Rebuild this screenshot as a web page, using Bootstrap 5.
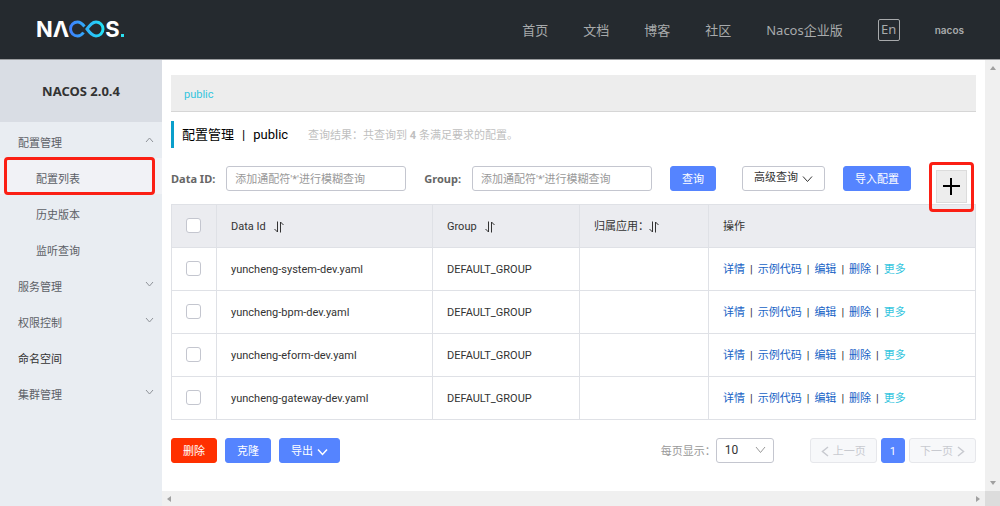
<!DOCTYPE html>
<html lang="zh-CN">
<head>
<meta charset="utf-8">
<meta name="viewport" content="width=device-width, initial-scale=1">
<title>Nacos</title>
<link href="https://cdn.jsdelivr.net/npm/bootstrap@5.3.0/dist/css/bootstrap.min.css" rel="stylesheet">
<style>
  body { font: 11px/18px Roboto, "Noto Sans CJK SC", sans-serif; color: #333; background: #fff; }
  a { text-decoration: none; }
  svg { display: block; fill: none; stroke: currentColor; }

  /* top bar */
  .topbar { height: 60px; padding: 0 36px; background: #252a2f; border-bottom: 1px solid #9b9da0; }
  .brand-mark { padding-bottom: 2px; font: 700 22px/24px Inter, sans-serif; color: #fff; }
  .brand-dot { width: 3px; height: 3px; margin: 14px 0 0 1px; background: #2ae0f0; }
  .topnav { gap: 35px; font-size: 13px; font-family: "Noto Sans", "Noto Sans CJK SC", sans-serif; }
  .topnav a { color: #a8aaac; }
  .topnav .lang { width: 22px; height: 22px; line-height: 18px; border: 1px solid #a8aaac; border-radius: 2px; text-align: center; }
  .topnav .account { font: 600 10px/20px Inter, sans-serif; }

  /* side menu */
  .side { width: 162px; background: #e9edf2; }
  .side-title { height: 62px; font: 700 13px/20px "Noto Sans", sans-serif; background: #d9dde4; }
  .side-item { height: 36px; padding: 8px 8px 0 18px; color: #5c6066; }
  .side-item.sub { padding-left: 36px; }
  .side-item.dark { color: #333; }
  .side-item.current { background: #f1f2f6; }
  .side-item svg { margin-bottom: 8px; color: #8f9399; }
  .callout-frame { position: absolute; border: 3px solid #fb1f14; border-radius: 4px; pointer-events: none; }
  .side .callout-frame { inset: -1px 7px -1px 4px; }

  /* scroll bars */
  .bar-v { width: 15px; padding: 6px 0; background: #f0f0f0; }
  .bar-h { height: 15px; padding: 0 5px; background: #f0f0f0; }
  .bar-corner { width: 15px; background: #dcdcdc; }
  .bar-v svg, .bar-h svg { fill: #a0a0a0; stroke: none; }

  /* content */
  .content { padding: 15px 9px 0; }
  .namespace { height: 37px; padding: 3px 13px 0; background: #ededed; border-bottom: 1px solid #d6d6d6; }
  .namespace a { color: #33c5de; }
  .page-title { height: 27px; margin: 9px 0 18px; padding-left: 8px; border-left: 3px solid #0a9fcb; gap: 20px; }
  .page-title h1 { margin: 0; font-size: 13px; line-height: 20px; color: #000; }
  .page-title p { margin: 0; padding-top: 2px; color: #bfbfbf; }
  .search { height: 38px; }
  .search label { font: 700 11px/25px "Noto Sans", sans-serif; color: #666; white-space: nowrap; }
  .gap-s { margin-left: 11px; }
  .gap-m { margin-left: 18px; }
  .gap-l { margin-left: 26px; }
  .field { width: 180px; height: 25px; padding: 2px 8px 0; font-size: 11px; border: 1px solid #c4c6cf; border-radius: 3px; }
  .field::placeholder { color: #999; }
  .tool { height: 25px; padding: 2px 11px 0; font-size: 11px; line-height: 21px; border-radius: 3px; white-space: nowrap; }
  .tool.blue { color: #fff; background: #5584ff; border-color: #5584ff; }
  .tool.red { color: #fff; background: #ff3000; border-color: #ff3000; }
  .tool.plain { padding-top: 0; color: #333; background: #fff; border-color: #c4c6cf; }
  .tool.pager, .tool.pager:disabled { padding: 2px 10px 0; color: #c8cad0; background: #f7f8fa; border-color: #e6e7eb; opacity: 1; }
  .add { position: relative; width: 31px; height: 33px; margin: 4px 9px 0 0; background: #ededed; border: 1px solid #dcdcdc; color: #000; }
  .add .callout-frame { inset: -9px -8px -10px -8px; z-index: 2; }

  .configs { table-layout: fixed; margin: 0 0 18px; border: 1px solid #dcdee3; }
  .configs th, .configs td { height: 43px; padding: 2px 14px 0; border: 1px solid #dfe1e6; font-weight: 400; vertical-align: middle; color: #333; }
  .configs th { background: #ebecf0; }
  .configs .form-check-input { display: block; width: 15px; height: 15px; margin: -4px 0 0; border: 1px solid #c4c6cf; border-radius: 3px; }
  .ops { gap: 5px; }
  .configs td a { color: #1763c6; }
  .configs td a.more { color: #33c5de; }
  .size-label { padding-top: 2px; color: #999; }
  .size-pick { width: 58px; height: 25px; padding: 0 8px; font-size: 12px; line-height: 23px; color: #333; border: 1px solid #c4c6cf; border-radius: 3px; appearance: none; background-color: #fff; }
  .size-caret { position: absolute; right: 8px; top: 8px; color: #999; pointer-events: none; }
  .pages { margin-left: 36px; }
</style>
</head>
<body class="d-flex flex-column min-vh-100">

<header class="topbar d-flex align-items-center justify-content-between flex-shrink-0">
  <a href="#" class="brand-mark d-flex align-items-center" aria-label="NACOS">
    <span>N</span><span>Λ</span>
    <svg width="36" height="18" viewBox="0 0 36 18" stroke-width="3">
      <defs><linearGradient id="flow" gradientUnits="userSpaceOnUse" x1="0" y1="0" x2="36" y2="0"><stop offset="0" stop-color="#3f7dff"/><stop offset="1" stop-color="#1fe6f5"/></linearGradient></defs>
      <path stroke="url(#flow)" d="M14.500 12.500C12.800 15 11 16 8.500 16A7 7 0 0 1 8.500 2C11.500 2 13.500 4 15.500 6.500M18 9C21 5 23.300 2 27 2A7 7 0 0 1 27 16C23.300 16 21 13 18 9Z"/>
    </svg>
    <span>S</span><i class="brand-dot"></i>
  </a>
  <nav class="topnav d-flex align-items-center">
    <a href="#">首页</a><a href="#">文档</a><a href="#">博客</a><a href="#">社区</a><a href="#">Nacos企业版</a>
    <a href="#" class="lang">En</a><a href="#" class="account">nacos</a>
  </nav>
</header>

<div class="d-flex flex-grow-1">
  <aside class="side flex-shrink-0">
    <div class="side-title d-flex align-items-center justify-content-center">NACOS 2.0.4</div>
    <nav>
      <a href="#" class="side-item d-flex align-items-center justify-content-between">配置管理<svg width="9" height="6" viewBox="0 0 9 6"><path d="M1 5l3.500-4L8 5"/></svg></a>
      <div class="position-relative">
        <a href="#" class="side-item sub current d-flex align-items-center">配置列表</a>
        <span class="callout-frame"></span>
      </div>
      <a href="#" class="side-item sub d-flex align-items-center">历史版本</a>
      <a href="#" class="side-item sub d-flex align-items-center">监听查询</a>
      <a href="#" class="side-item d-flex align-items-center justify-content-between">服务管理<svg width="9" height="6" viewBox="0 0 9 6"><path d="M1 1l3.500 4L8 1"/></svg></a>
      <a href="#" class="side-item d-flex align-items-center justify-content-between">权限控制<svg width="9" height="6" viewBox="0 0 9 6"><path d="M1 1l3.500 4L8 1"/></svg></a>
      <a href="#" class="side-item dark d-flex align-items-center">命名空间</a>
      <a href="#" class="side-item d-flex align-items-center justify-content-between">集群管理<svg width="9" height="6" viewBox="0 0 9 6"><path d="M1 1l3.500 4L8 1"/></svg></a>
    </nav>
  </aside>

  <div class="d-flex flex-column flex-grow-1">
    <div class="d-flex flex-grow-1">
      <main class="content flex-grow-1">
        <div class="namespace d-flex align-items-center"><a href="#">public</a></div>

        <div class="page-title d-flex align-items-center">
          <h1 class="fw-normal d-flex gap-2"><span>配置管理</span><span>|</span><span>public</span></h1>
          <p>查询结果：共查询到 <b>4</b> 条满足要求的配置。</p>
        </div>

        <form class="search d-flex align-items-start">
          <label for="data-id">Data ID:</label>
          <input id="data-id" class="field gap-s" type="text" placeholder="添加通配符'*'进行模糊查询">
          <label for="group" class="gap-m">Group:</label>
          <input id="group" class="field gap-s" type="text" placeholder="添加通配符'*'进行模糊查询">
          <button type="button" class="btn tool blue gap-m">查询</button>
          <button type="button" class="btn tool plain gap-l d-flex gap-1">高级查询<svg class="align-self-center" width="11" height="8" viewBox="0 0 11 8"><path d="M1 1.500l4.500 5 4.500-5"/></svg></button>
          <button type="button" class="btn tool blue gap-m">导入配置</button>
          <button type="button" class="add p-0 ms-auto d-flex align-items-center justify-content-center" aria-label="新建配置">
            <svg width="19" height="19" viewBox="0 0 19 19" stroke-width="2"><path d="M1 9h17M9 1v17"/></svg>
            <span class="callout-frame"></span>
          </button>
        </form>

        <table class="configs table">
          <colgroup><col style="width:45px"><col style="width:216px"><col style="width:147px"><col style="width:129px"><col></colgroup>
          <thead>
            <tr>
              <th><input class="form-check-input" type="checkbox" aria-label="全选"></th>
              <th><span class="d-flex align-items-center gap-2">Data Id<svg width="10" height="12" viewBox="0 0 10 12"><path d="M3.500 .5v10.500L.5 8M6.500 11.500V1l3 3"/></svg></span></th>
              <th><span class="d-flex align-items-center gap-2">Group<svg width="10" height="12" viewBox="0 0 10 12"><path d="M3.500 .5v10.500L.5 8M6.500 11.500V1l3 3"/></svg></span></th>
              <th><span class="d-flex align-items-center">归属应用：<svg width="10" height="12" viewBox="0 0 10 12"><path d="M3.500 .5v10.500L.5 8M6.500 11.500V1l3 3"/></svg></span></th>
              <th>操作</th>
            </tr>
          </thead>
          <tbody>
            <tr><td><input class="form-check-input" type="checkbox" aria-label="yuncheng-system-dev.yaml"></td><td>yuncheng-system-dev.yaml</td><td>DEFAULT_GROUP</td><td></td>
              <td><div class="d-flex ops"><a href="#">详情</a><span>|</span><a href="#">示例代码</a><span>|</span><a href="#">编辑</a><span>|</span><a href="#">删除</a><span>|</span><a href="#" class="more">更多</a></div></td></tr>
            <tr><td><input class="form-check-input" type="checkbox" aria-label="yuncheng-bpm-dev.yaml"></td><td>yuncheng-bpm-dev.yaml</td><td>DEFAULT_GROUP</td><td></td>
              <td><div class="d-flex ops"><a href="#">详情</a><span>|</span><a href="#">示例代码</a><span>|</span><a href="#">编辑</a><span>|</span><a href="#">删除</a><span>|</span><a href="#" class="more">更多</a></div></td></tr>
            <tr><td><input class="form-check-input" type="checkbox" aria-label="yuncheng-eform-dev.yaml"></td><td>yuncheng-eform-dev.yaml</td><td>DEFAULT_GROUP</td><td></td>
              <td><div class="d-flex ops"><a href="#">详情</a><span>|</span><a href="#">示例代码</a><span>|</span><a href="#">编辑</a><span>|</span><a href="#">删除</a><span>|</span><a href="#" class="more">更多</a></div></td></tr>
            <tr><td><input class="form-check-input" type="checkbox" aria-label="yuncheng-gateway-dev.yaml"></td><td>yuncheng-gateway-dev.yaml</td><td>DEFAULT_GROUP</td><td></td>
              <td><div class="d-flex ops"><a href="#">详情</a><span>|</span><a href="#">示例代码</a><span>|</span><a href="#">编辑</a><span>|</span><a href="#">删除</a><span>|</span><a href="#" class="more">更多</a></div></td></tr>
          </tbody>
        </table>

        <div class="d-flex align-items-center">
          <button type="button" class="btn tool red">删除</button>
          <button type="button" class="btn tool blue ms-2">克隆</button>
          <button type="button" class="btn tool blue ms-2 d-flex gap-1">导出<svg class="align-self-center" width="11" height="8" viewBox="0 0 11 8" stroke-width="1.500"><path d="M1 1.500l4.500 5 4.500-5"/></svg></button>
          <label for="page-size" class="size-label ms-auto">每页显示：</label>
          <div class="position-relative">
            <select id="page-size" class="size-pick"><option>10</option><option>20</option></select>
            <svg class="size-caret" width="11" height="8" viewBox="0 0 11 8"><path d="M1 1l4.500 5.500L10 1"/></svg>
          </div>
          <nav class="pages d-flex gap-1">
            <button type="button" class="btn tool pager d-flex gap-1" disabled><svg class="align-self-center" width="8" height="11" viewBox="0 0 8 11" stroke-width="1.500"><path d="M7 1L1.500 5.500 7 10"/></svg>上一页</button>
            <button type="button" class="btn tool blue px-2">1</button>
            <button type="button" class="btn tool pager d-flex gap-1" disabled>下一页<svg class="align-self-center" width="8" height="11" viewBox="0 0 8 11" stroke-width="1.500"><path d="M1 1l5.500 4.500L1 10"/></svg></button>
          </nav>
        </div>
      </main>
      <div class="bar-v d-flex flex-column align-items-center justify-content-between flex-shrink-0">
        <svg width="6" height="4" viewBox="0 0 6 4"><path d="M0 4l3-4 3 4z"/></svg>
        <svg width="6" height="4" viewBox="0 0 6 4"><path d="M0 0l3 4 3-4z"/></svg>
      </div>
    </div>
    <div class="d-flex flex-shrink-0">
      <div class="bar-h d-flex align-items-center justify-content-between flex-grow-1">
        <svg width="4" height="6" viewBox="0 0 4 6"><path d="M4 0L0 3l4 3z"/></svg>
        <svg width="4" height="6" viewBox="0 0 4 6"><path d="M0 0l4 3-4 3z"/></svg>
      </div>
      <div class="bar-corner"></div>
    </div>
  </div>
</div>

<script src="https://cdn.jsdelivr.net/npm/bootstrap@5.3.0/dist/js/bootstrap.bundle.min.js"></script>
</body>
</html>
